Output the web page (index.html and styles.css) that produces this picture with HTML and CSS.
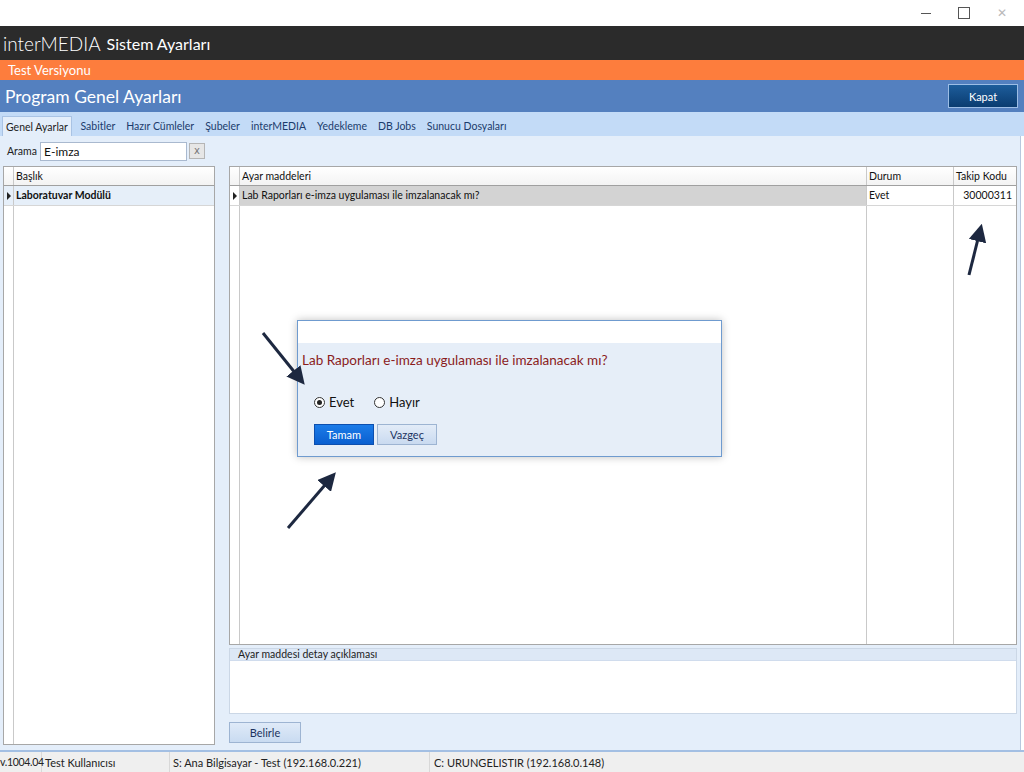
FILE: index.html
```html
<!DOCTYPE html>
<html lang="tr">
<head>
<meta charset="utf-8">
<title>interMEDIA Sistem Ayarları</title>
<link rel="stylesheet" href="styles.css">
</head>
<body>
<div class="window">
  <div class="titlebar">
    <span class="wc wc-min"></span>
    <span class="wc wc-max"></span>
    <span class="wc wc-close">✕</span>
  </div>
  <div class="appbar"><span class="brand">interMEDIA</span><span class="apptitle">Sistem Ayarları</span></div>
  <div class="testbar">Test Versiyonu</div>
  <div class="pagehead">
    <span class="pagetitle">Program Genel Ayarları</span>
    <button class="btn-kapat">Kapat</button>
  </div>
  <div class="tabs">
    <span class="tab active">Genel Ayarlar</span>
    <span class="tab">Sabitler</span>
    <span class="tab">Hazır Cümleler</span>
    <span class="tab">Şubeler</span>
    <span class="tab">interMEDIA</span>
    <span class="tab">Yedekleme</span>
    <span class="tab">DB Jobs</span>
    <span class="tab">Sunucu Dosyaları</span>
  </div>
  <div class="content">
    <div class="search">
      <span class="search-label">Arama</span>
      <span class="search-input">E-imza</span>
      <span class="search-clear">x</span>
    </div>
    <div class="panes">
      <div class="grid grid-left">
        <div class="grow ghead">
          <span class="gind"></span>
          <span class="gcell">Başlık</span>
        </div>
        <div class="grow gsel-left">
          <span class="gind"><span class="tri"></span></span>
          <span class="gcell bold">Laboratuvar Modülü</span>
        </div>
        <div class="grow gfill">
          <span class="gind"></span>
          <span class="gcell"></span>
        </div>
      </div>
      <div class="rightcol">
        <div class="grid grid-right">
          <div class="grow ghead">
            <span class="gind"></span>
            <span class="gcell c-ayar">Ayar maddeleri</span>
            <span class="gcell c-durum">Durum</span>
            <span class="gcell c-takip">Takip Kodu</span>
          </div>
          <div class="grow">
            <span class="gind"><span class="tri"></span></span>
            <span class="gcell c-ayar sel">Lab Raporları e-imza uygulaması ile imzalanacak mı?</span>
            <span class="gcell c-durum">Evet</span>
            <span class="gcell c-takip num">30000311</span>
          </div>
          <div class="grow gfill">
            <span class="gind"></span>
            <span class="gcell c-ayar"></span>
            <span class="gcell c-durum"></span>
            <span class="gcell c-takip"></span>
          </div>
        </div>
        <div class="groupbox">
          <div class="groupbox-title">Ayar maddesi detay açıklaması</div>
          <div class="groupbox-body"></div>
        </div>
        <div class="actions"><button class="btn-belirle">Belirle</button></div>
      </div>
    </div>
  </div>
  <div class="statusbar">
    <span class="sb sb-ver">v.1004.04</span>
    <span class="sb sb-user">Test Kullanıcısı</span>
    <span class="sb sb-server">S: Ana Bilgisayar - Test (192.168.0.221)</span>
    <span class="sb sb-client">C: URUNGELISTIR (192.168.0.148)</span>
  </div>
</div>

<div class="dialog">
  <div class="dialog-top"></div>
  <div class="dialog-body">
    <div class="dialog-q">Lab Raporları e-imza uygulaması ile imzalanacak mı?</div>
    <div class="radios">
      <span class="radio"><span class="rcircle on"></span>Evet</span>
      <span class="radio"><span class="rcircle"></span>Hayır</span>
    </div>
    <div class="dialog-btns">
      <button class="btn-tamam">Tamam</button>
      <button class="btn-vazgec">Vazgeç</button>
    </div>
  </div>
</div>

<svg class="arrows" width="1024" height="772" viewBox="0 0 1024 772">
  <defs>
    <marker id="ah" markerWidth="6" markerHeight="6" refX="3.5" refY="3" orient="auto" markerUnits="strokeWidth">
      <path d="M0,0 L6,3 L0,6 Z" fill="#1d2840"/>
    </marker>
  </defs>
  <line x1="263" y1="333" x2="300" y2="379" stroke="#1d2840" stroke-width="3" marker-end="url(#ah)"/>
  <line x1="288" y1="528" x2="331" y2="478" stroke="#1d2840" stroke-width="3" marker-end="url(#ah)"/>
  <line x1="969" y1="275" x2="980" y2="231" stroke="#1d2840" stroke-width="3" marker-end="url(#ah)"/>
</svg>
</body>
</html>
```
FILE: styles.css
```css
* { box-sizing: border-box; }
html, body { margin: 0; padding: 0; }
body {
  width: 1024px;
  height: 772px;
  overflow: hidden;
  background: #ffffff;
  font-family: Lato, "Open Sans", "Liberation Sans", sans-serif;
  color: #111;
  position: relative;
}
button { font-family: inherit; cursor: default; }

.window {
  width: 1024px;
  height: 772px;
  display: flex;
  flex-direction: column;
}

/* title bar */
.titlebar {
  height: 26px;
  background: #fff;
  display: flex;
  justify-content: flex-end;
  align-items: center;
  padding-right: 3px;
}
.wc { width: 38px; height: 26px; display: flex; align-items: center; justify-content: center; }
.wc-min::after { content: ""; width: 10px; height: 1px; background: #555; }
.wc-max::after { content: ""; width: 10px; height: 10px; border: 1px solid #555; }
.wc-close { color: #b9b9b9; font-size: 12px; font-family: "DejaVu Sans", sans-serif; }

.appbar {
  height: 34px;
  background: #2b2b2b;
  color: #fff;
  display: flex;
  align-items: center;
  padding-left: 3px;
  gap: 6px;
}
.brand { font-size: 19px; font-weight: 300; }
.apptitle { font-size: 16px; }

.testbar {
  height: 20px;
  background: #fd7d3d;
  color: #fff;
  font-size: 13px;
  line-height: 20px;
  padding-left: 8px;
}

.pagehead {
  height: 32px;
  background: #5480bf;
  display: flex;
  align-items: center;
  justify-content: space-between;
  padding: 0 6px 0 5px;
}
.pagetitle { color: #fff; font-size: 17.5px; }
.btn-kapat {
  width: 70px;
  height: 24px;
  border: 1px solid #9cbde5;
  background: linear-gradient(#1d5d9b, #0a3c70);
  color: #fff;
  font-size: 11px;
  padding: 0;
}

.tabs {
  height: 24px;
  background: #c3dbf7;
  display: flex;
  align-items: flex-end;
  padding-left: 2px;
}
.tab {
  font-size: 10.5px;
  color: #1b3c6c;
  height: 20px;
  line-height: 20px;
  padding: 0 5.5px;
}
.tab.active {
  background: #e4eefa;
  border: 1px solid #a9c3e4;
  border-bottom: none;
  color: #222;
  padding: 0 3px;
  margin-right: 3px;
}

.content {
  flex: 1;
  background: #e4eefa;
  display: flex;
  flex-direction: column;
  padding: 5px 4px 5px 3px;
  width: 1021px;
  border-right: 1px solid #b7c8de;
}
.search {
  height: 20px;
  display: flex;
  align-items: center;
}
.search-label { font-size: 10.5px; padding-left: 4px; width: 37px; color: #222; }
.search-input {
  width: 147px;
  height: 19px;
  background: #fff;
  border: 1px solid #a9b9cf;
  font-size: 12px;
  line-height: 17px;
  padding-left: 3px;
}
.search-clear {
  margin-left: 2px;
  width: 16px;
  height: 16px;
  border: 1px solid #b5b5b5;
  background: #e6e6e6;
  color: #777;
  font-size: 10px;
  line-height: 13px;
  text-align: center;
  font-family: "DejaVu Sans", sans-serif;
}

.panes {
  flex: 1;
  margin-top: 5px;
  display: grid;
  grid-template-columns: 212px 788px;
  column-gap: 14px;
}

.grid {
  background: #fff;
  border: 1px solid #a7a7a7;
  display: flex;
  flex-direction: column;
  font-size: 10.5px;
}
.grid-left { height: 579px; }
.grow { display: flex; height: 20px; border-bottom: 1px solid #d6d6d6; }
.grow.gfill { flex: 1; border-bottom: none; }
.ghead { height: 19px; border-bottom: 1px solid #a0a0a0; background: linear-gradient(#ffffff, #f3f3f3); }
.gind {
  width: 10px;
  border-right: 1px solid #c9c9c9;
  display: flex;
  align-items: center;
  justify-content: center;
  flex: none;
}
.tri {
  width: 0; height: 0;
  border-top: 4px solid transparent;
  border-bottom: 4px solid transparent;
  border-left: 4px solid #222;
}
.gcell {
  flex: 1;
  padding-left: 2px;
  line-height: 19px;
  white-space: nowrap;
  overflow: hidden;
}
.gsel-left { background: #e6eff9; }
.bold { font-weight: 700; }

.rightcol { display: flex; flex-direction: column; }
.grid-right { height: 479px; }
.c-ayar { flex: none; width: 627px; border-right: 1px solid #c9c9c9; }
.c-durum { flex: none; width: 87px; border-right: 1px solid #c9c9c9; }
.c-takip { flex: 1; }
.gcell.sel { background: #d3d3d3; }
.num { text-align: right; padding-right: 4px; }

.groupbox {
  margin-top: 3px;
  height: 66px;
  border: 1px solid #cbd7e6;
  display: flex;
  flex-direction: column;
}
.groupbox-title {
  height: 12px;
  background: #dde8f6;
  border-bottom: 1px solid #d0dced;
  font-size: 10.5px;
  line-height: 10px;
  padding-left: 8px;
  color: #222;
}
.groupbox-body { flex: 1; background: #fff; }

.actions { margin-top: 7px; }
.btn-belirle {
  width: 72px;
  height: 21px;
  border: 1px solid #9db4d2;
  background: linear-gradient(#dfeaf8, #c9dbf1);
  color: #1b3360;
  font-size: 11px;
  padding: 0;
}

.statusbar {
  height: 22px;
  background: #efefef;
  border-top: 2px solid #a3bfe3;
  display: flex;
  align-items: center;
  font-size: 11px;
  color: #222;
}
.sb { height: 20px; line-height: 21px; border-right: 1px solid #d8d8d8; padding-left: 3px; white-space: nowrap; }
.sb-ver { width: 42px; padding-left: 0; font-size: 10.5px; letter-spacing: -0.3px; }
.sb-user { width: 128px; }
.sb-server { width: 260px; }
.sb-client { border-right: none; padding-left: 4px; }

/* dialog */
.dialog {
  position: absolute;
  left: 297px;
  top: 320px;
  width: 425px;
  height: 137px;
  border: 1px solid #6f9bcf;
  background: #e6eef8;
  box-shadow: 0 0 8px rgba(0,0,0,0.25);
  display: flex;
  flex-direction: column;
}
.dialog-top { height: 22px; background: #fff; }
.dialog-body { flex: 1; padding: 8px 0 0 4px; }
.dialog-q { color: #8a1c1c; font-size: 13.5px; line-height: 18px; }
.radios { margin-top: 25px; padding-left: 12px; display: flex; gap: 20px; font-size: 13px; }
.radio { display: flex; align-items: center; gap: 4px; }
.rcircle {
  width: 11px; height: 11px;
  border: 1px solid #333;
  border-radius: 50%;
  background: #fff;
  position: relative;
}
.rcircle.on::after {
  content: "";
  position: absolute;
  left: 2px; top: 2px;
  width: 5px; height: 5px;
  border-radius: 50%;
  background: #222;
}
.dialog-btns { margin-top: 14px; padding-left: 12px; display: flex; gap: 3px; }
.btn-tamam {
  width: 60px; height: 21px;
  border: 1px solid #0d4fae;
  background: linear-gradient(#1c7ce8, #0a5fd0);
  color: #fff;
  font-size: 11px;
  padding: 0;
}
.btn-vazgec {
  width: 60px; height: 21px;
  border: 1px solid #9db4d2;
  background: linear-gradient(#e3ecf8, #c9daf0);
  color: #1b3360;
  font-size: 11px;
  padding: 0;
}

.arrows { position: absolute; left: 0; top: 0; pointer-events: none; }
```
